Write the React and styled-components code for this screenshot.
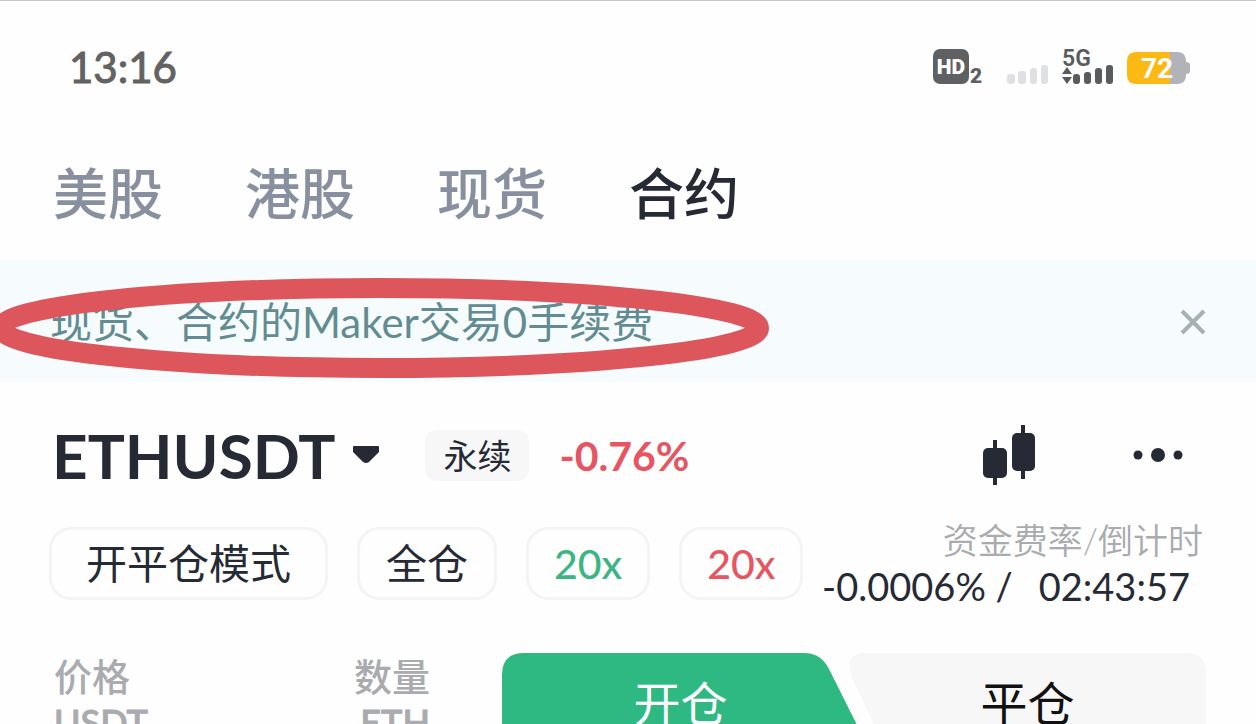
import React from 'react';
import styled, { createGlobalStyle } from 'styled-components';

const chips = [
    { label: '开平仓模式', pad: 34 },
    { label: '全仓', pad: 26 },
    { label: '20x', pad: 25, color: '#3bb583' },
    { label: '20x', pad: 25, color: '#e65561' },
];

const Hd = () => (
    <svg width="52" height="40" viewBox="0 0 52 40" role="img" aria-label="HD 2">
        <rect x="0" y="2" width="36" height="35" rx="7" fill="#5f6063" />
        <IconText x="18" y="27" textAnchor="middle" fontSize="21" fill="#fff">HD</IconText>
        <IconText x="37" y="36" fontSize="21" fill="#5f6063">2</IconText>
    </svg>
);

const WeakSignal = () => (
    <svg width="42" height="40" viewBox="0 0 42 40" fill="#dfe0e3" role="img" aria-label="无信号">
        <rect x="0" y="27" width="8" height="10" rx="3" />
        <rect x="11" y="24" width="8" height="13" rx="3" />
        <rect x="23" y="21" width="7" height="16" rx="3" />
        <rect x="34" y="18" width="7" height="19" rx="3" />
    </svg>
);

const Signal5G = () => (
    <svg width="52" height="40" viewBox="0 0 52 40" fill="#5a5b5e" role="img" aria-label="5G">
        <IconText x="0" y="19" fontSize="23" $weight={600}>5G</IconText>
        <path d="M5 20 L10 27 H0 Z M0 30 H10 L5 37 Z" />
        <rect x="11" y="27" width="7" height="10" rx="3" />
        <rect x="22" y="25" width="7" height="12" rx="3" />
        <rect x="33" y="21" width="7" height="16" rx="3" />
        <rect x="44" y="18" width="7" height="19" rx="3" />
    </svg>
);

const Battery = () => (
    <svg width="64" height="40" viewBox="0 0 64 40" role="img" aria-label="电量 72%">
        <path d="M43 5 H50 Q59 5 59 14 V15 Q63 15 63 18 V24 Q63 27 59 27 V28 Q59 37 50 37 H43 Z" fill="#b2b3b8" />
        <path d="M9 5 H43 V37 H9 Q0 37 0 28 V14 Q0 5 9 5 Z" fill="#fcb813" />
        <IconText x="30" y="31" textAnchor="middle" fontSize="28" fill="#fff" $weight={700}>72</IconText>
    </svg>
);

const Candles = () => (
    <svg width="52" height="60" viewBox="0 0 52 60" fill="#262a35" aria-hidden="true">
        <rect x="10" y="15" width="4" height="45" />
        <rect x="0" y="23" width="24" height="30" rx="5" />
        <rect x="38" y="0" width="4" height="54" />
        <rect x="29" y="8" width="23" height="38" rx="5" />
    </svg>
);

const Dots = () => (
    <svg width="50" height="16" viewBox="0 0 50 16" fill="#262a35" aria-hidden="true">
        <circle cx="5" cy="8" r="4.5" />
        <circle cx="25" cy="8" r="7" />
        <circle cx="45" cy="8" r="4.5" />
    </svg>
);

const App = () => {
    return (
        <Page>
            <GlobalStyle />
            <StatusBar>
                <Clock>13:16</Clock>
                <StatusIcons>
                    <Hd />
                    <WeakSignal />
                    <Signal5G />
                    <Battery />
                </StatusIcons>
            </StatusBar>

            <MarketNav>
                <MarketLink href="#us">美股</MarketLink>
                <MarketLink href="#hk">港股</MarketLink>
                <MarketLink href="#spot">现货</MarketLink>
                <MarketLink href="#futures" $active aria-current="page">合约</MarketLink>
            </MarketNav>

            <Banner>
                <BannerText>现货、合约的Maker交易0手续费</BannerText>
                <IconButton aria-label="关闭">
                    <svg width="26" height="26" viewBox="0 0 26 26" stroke="#a6b1b4" strokeWidth="4" aria-hidden="true">
                        <path d="M2 2 L24 24 M24 2 L2 24" />
                    </svg>
                </IconButton>
                <Marker width="780" height="100" viewBox="0 0 780 100" aria-hidden="true">
                    <ellipse cx="380" cy="50" rx="379" ry="40" fill="none" stroke="#dc565c" strokeWidth="20" />
                </Marker>
            </Banner>

            <PairRow>
                <PairButton>
                    ETHUSDT
                    <svg width="26" height="18" viewBox="0 0 26 18" fill="#262a35" aria-hidden="true">
                        <path d="M1 0 H25 Q26 0 26 1 V6 L16 16 Q13 18 10 16 L0 6 V1 Q0 0 1 0 Z" />
                    </svg>
                </PairButton>
                <Badge>永续</Badge>
                <Change>-0.76%</Change>
                <PairTools>
                    <IconButton aria-label="K线"><Candles /></IconButton>
                    <IconButton aria-label="更多"><Dots /></IconButton>
                </PairTools>
            </PairRow>

            <ModeRow>
                <Chips>
                    {chips.map((chip, i) => (
                        <Chip key={i} $pad={chip.pad} $color={chip.color}>{chip.label}</Chip>
                    ))}
                </Chips>
                <Funding>
                    <FundingLabel>资金费率/倒计时</FundingLabel>
                    <FundingValue>
                        <span>-0.0006% /</span>
                        <span>02:43:57</span>
                    </FundingValue>
                </Funding>
            </ModeRow>

            <TradeRow>
                <BookHead>
                    <BookLabel>价格<BookUnit>USDT</BookUnit></BookLabel>
                    <BookLabel $right>数量<BookUnit>ETH</BookUnit></BookLabel>
                </BookHead>
                <TradeTabs>
                    <TradeTab $active>
                        <TabShape viewBox="0 0 369 100" preserveAspectRatio="none" fill="#2eb982" aria-hidden="true">
                            <path d="M22 0 H302 Q319 0 327 16 L369 100 H0 V22 Q0 0 22 0 Z" />
                        </TabShape>
                        <TabLabel $active>开仓</TabLabel>
                    </TradeTab>
                    <TradeTab>
                        <TabShape viewBox="0 0 357 100" preserveAspectRatio="none" fill="#f7f7f7" aria-hidden="true">
                            <path d="M16 0 H337 Q357 0 357 20 V100 H38 L2 22 Q-4 0 16 0 Z" />
                        </TabShape>
                        <TabLabel>平仓</TabLabel>
                    </TradeTab>
                </TradeTabs>
            </TradeRow>
        </Page>
    );
};

export default App;

const GlobalStyle = createGlobalStyle`
  * {
    box-sizing: border-box;
  }

  html {
    scrollbar-width: none;
  }

  body {
    margin: 0;
    background: #fefefe;
    color: #262a35;
    font-family: Lato, "Noto Sans CJK SC", sans-serif;
  }

  button {
    padding: 0;
    border: 0;
    background: none;
    color: inherit;
    font: inherit;
    cursor: pointer;
  }

  svg {
    display: block;
    flex: none;
    overflow: visible;
  }
`;

const Page = styled.div`
  border-top: 1px solid #c8c8c8;
`;

const IconText = styled.text`
  font-family: Roboto, sans-serif;
  font-weight: ${({ $weight }) => $weight || 900};
`;

const StatusBar = styled.header`
  display: flex;
  align-items: center;
  justify-content: space-between;
  padding: 38px 65px 0 69px;
`;

const Clock = styled.time`
  color: #626262;
  font-size: 42px;
  line-height: 56px;
  -webkit-text-stroke: 1px #626262;
`;

const StatusIcons = styled.div`
  display: flex;
  align-items: center;
  gap: 0 13px;

  svg:first-child {
    margin-right: 9px;
  }
`;

const MarketNav = styled.nav`
  display: flex;
  gap: 82px;
  padding: 62px 53px 31px;
`;

const MarketLink = styled.a`
  color: ${({ $active }) => ($active ? '#262a35' : '#88909f')};
  font-size: 55px;
  font-weight: 500;
  line-height: 72px;
  text-decoration: none;
`;

const Banner = styled.section`
  position: relative;
  display: flex;
  align-items: center;
  justify-content: space-between;
  padding: 32px 50px 30px;
  background: #f6fcfd;
`;

const BannerText = styled.p`
  margin: 0;
  color: #628c91;
  font-size: 42px;
  line-height: 60px;
`;

/* highlight ring lying over the notice */
const Marker = styled.svg`
  position: absolute;
  top: 18px;
  left: 0;
  pointer-events: none;
`;

const IconButton = styled.button`
  display: flex;
  align-items: center;
  justify-content: center;
`;

const PairRow = styled.section`
  display: flex;
  align-items: center;
  padding: 39px 73px 0 52px;
`;

const PairButton = styled.button`
  display: flex;
  align-items: center;
  gap: 18px;
  font-size: 62px;
  font-weight: 700;
  line-height: 68px;
`;

const Badge = styled.span`
  margin-left: 46px;
  padding: 0 18px;
  border-radius: 12px;
  background: #f7f7f7;
  font-size: 34px;
  line-height: 51px;
`;

const Change = styled.span`
  margin-left: 30px;
  color: #e65561;
  font-size: 41px;
  font-weight: 700;
  line-height: 51px;
`;

const PairTools = styled.div`
  display: flex;
  align-items: center;
  gap: 98px;
  margin-left: auto;
`;

const ModeRow = styled.section`
  display: flex;
  align-items: center;
  justify-content: space-between;
  padding: 28px 53px 0 49px;
`;

const Chips = styled.div`
  display: flex;
  gap: 29px;
`;

const Chip = styled.button`
  padding: 0 ${({ $pad }) => $pad}px;
  border: 3px solid #f4f4f4;
  border-radius: 22px;
  color: ${({ $color }) => $color || '#262a35'};
  font-size: 41px;
  font-weight: ${({ $color }) => ($color ? 500 : 400)};
  line-height: 67px;
  white-space: nowrap;
`;

const Funding = styled.div`
  display: flex;
  flex-direction: column;
  align-items: flex-end;
  white-space: nowrap;
`;

const FundingLabel = styled.span`
  color: #a9abaf;
  font-size: 35px;
  font-weight: 350;
  line-height: 46px;
`;

const FundingValue = styled.span`
  display: flex;
  gap: 26px;
  padding-right: 13px;
  font-size: 38px;
  line-height: 46px;
`;

const TradeRow = styled.section`
  display: flex;
  gap: 72px;
  padding: 44px 50px 0 54px;
`;

const BookHead = styled.div`
  display: flex;
  flex: 376;
  justify-content: space-between;
`;

const BookLabel = styled.span`
  color: #a9abaf;
  font-size: 38px;
  font-weight: 500;
  line-height: 46px;
  text-align: ${({ $right }) => ($right ? 'right' : 'left')};
`;

const BookUnit = styled.span`
  display: block;
  font-size: 36px;
  -webkit-text-stroke: 1px #a9abaf;
`;

const TradeTabs = styled.div`
  display: flex;
  flex: 704;
`;

const TradeTab = styled.button`
  position: relative;
  flex: ${({ $active }) => ($active ? 369 : 357)} 0 0;
  margin-right: ${({ $active }) => ($active ? '-22px' : '0')};
  color: ${({ $active }) => ($active ? '#fff' : '#111')};
  font-size: 47px;
  line-height: 100px;
`;

const TabShape = styled.svg`
  position: absolute;
  inset: 0;
  width: 100%;
  height: 100%;
`;

const TabLabel = styled.span`
  position: relative;
  padding-right: ${({ $active }) => ($active ? '12px' : '0')};
`;
